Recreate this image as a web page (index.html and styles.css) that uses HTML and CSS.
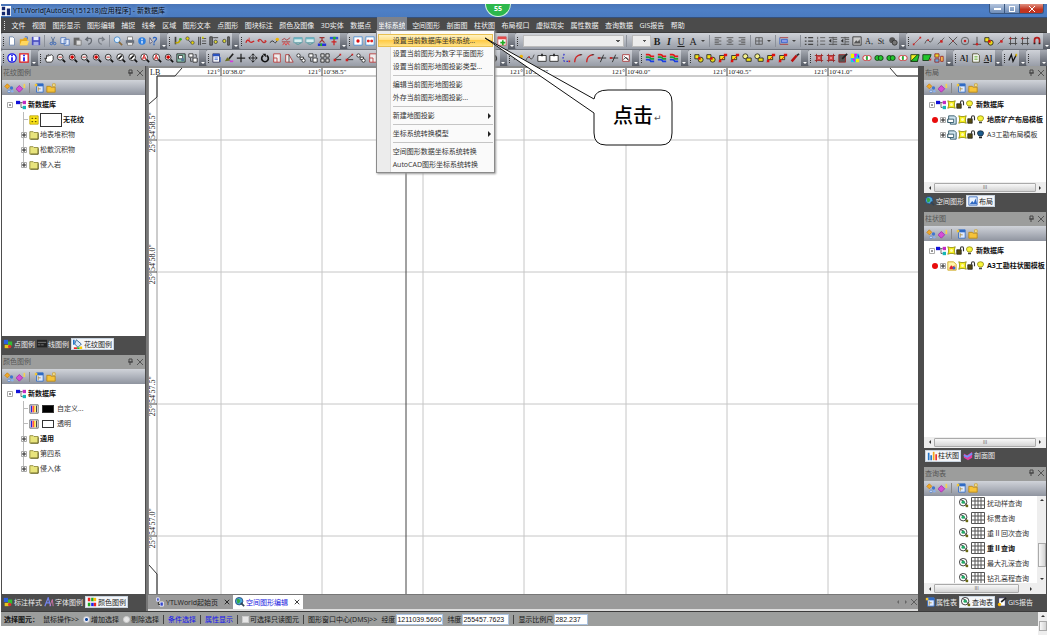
FILE: index.html
```html
<!DOCTYPE html>
<html lang="zh-CN">
<head>
<meta charset="utf-8">
<title>YTLWorld</title>
<link rel="stylesheet" href="styles.css">
</head>
<body>
<svg class="sprite" aria-hidden="true">
  <symbol id="new" viewBox="0 0 12 12"><path d="M3 1h4l2 2v8H3z" fill="#fff" stroke="#6b83a8"/></symbol>
  <symbol id="open" viewBox="0 0 12 12"><path d="M1 4h4l1-2h4v9H1z" fill="#e8a91c"/><path d="M3 6h9l-2 5H1z" fill="#ffd75e"/><path d="M7 1h3v3" fill="none" stroke="#3567c4"/></symbol>
  <symbol id="save" viewBox="0 0 12 12"><path d="M1 1h10v10H1z" fill="#4a4fc0"/><path d="M3 1h6v4H3z" fill="#e9ecff"/><path d="M3 7h6v4H3z" fill="#a8aee8"/></symbol>
  <symbol id="cut" viewBox="0 0 12 12"><path d="M4 1l3 7M8 1L5 8" stroke="#536d95" fill="none"/><circle cx="4" cy="9" r="1.5" fill="none" stroke="#2f60b8"/><circle cx="8" cy="9" r="1.5" fill="none" stroke="#2f60b8"/></symbol>
  <symbol id="copy" viewBox="0 0 12 12"><path d="M1 2h6v7H1zM5 4h6v7H5z" fill="#e6eefb" stroke="#4d76bd"/></symbol>
  <symbol id="paste" viewBox="0 0 12 12"><path d="M2 2h7v9H2z" fill="#666"/><path d="M5 5h6v6H5z" fill="#ddd" stroke="#777"/></symbol>
  <symbol id="undo" viewBox="0 0 12 12"><path d="M3 4q6-3 6 1T5 10M5 1L2 4l3 2" stroke="#666b73" stroke-width="1.5" fill="none"/></symbol>
  <symbol id="redo" viewBox="0 0 12 12"><path d="M9 4Q3 1 3 5t4 5M7 1l3 3-3 2" stroke="#7c8189" stroke-width="1.5" fill="none"/></symbol>
  <symbol id="find" viewBox="0 0 12 12"><circle cx="5" cy="4.500" r="3.500" fill="#dff0ff" stroke="#3c83c8"/><path d="M7 7l4 4" stroke="#8a6a3c" stroke-width="2"/></symbol>
  <symbol id="print" viewBox="0 0 12 12"><path d="M3 1h6v4H3z" fill="#fff" stroke="#777"/><path d="M1 5h10v4H1z" fill="#68707c"/><path d="M3 8h6v3H3z" fill="#fff" stroke="#777"/></symbol>
  <symbol id="info" viewBox="0 0 12 12"><circle cx="6" cy="6" r="4.500" fill="#2f7fe0"/><path d="M6 3v2M6 6v3" stroke="#fff" stroke-width="1.500"/></symbol>
  <symbol id="help" viewBox="0 0 12 12"><path d="M5 3q1-2 3-1t0 3-2 3M6 9v2" stroke="#2b63c0" stroke-width="1.500" fill="none"/><path d="M1 2v7l3-2z" fill="#fff" stroke="#557"/></symbol>
  <symbol id="vnode" viewBox="0 0 12 12"><path d="M2 1h2v9H2z" fill="#444"/><path d="M3 8q5 1 6-5" stroke="#c0a800" stroke-width="2" fill="none"/><circle cx="9" cy="4" r="1.500" fill="#3a3"/></symbol>
  <symbol id="vwave" viewBox="0 0 12 12"><circle cx="3" cy="3" r="2" fill="#e8d600" stroke="#555"/><circle cx="9" cy="8" r="2" fill="#e8d600" stroke="#555"/><path d="M4 5l3 3" stroke="#333"/></symbol>
  <symbol id="vbar" viewBox="0 0 12 12"><path d="M2 1v10M4 1v10" stroke="#333"/><path d="M6 3h5M6 6h5M6 9h5" stroke="#444"/><path d="M6 1h2v2H6z" fill="#d8d000"/></symbol>
  <symbol id="vbar2" viewBox="0 0 12 12"><path d="M1 1h3v10H1z" fill="#777" stroke="#333"/><circle cx="8" cy="7" r="2" fill="#e0dc30" stroke="#444"/><path d="M5 2h6" stroke="#333"/></symbol>
  <symbol id="vbar3" viewBox="0 0 12 12"><path d="M8 1h2v10H8z" fill="#777" stroke="#333"/><circle cx="4" cy="6" r="2" fill="#e0dc30" stroke="#444"/></symbol>
  <symbol id="crv" viewBox="0 0 12 12"><path d="M1 8q2-5 4-2t6 0" stroke="#c22" stroke-width="1.500" fill="none"/><path d="M5 2v5" stroke="#d33"/></symbol>
  <symbol id="crv2" viewBox="0 0 12 12"><path d="M1 6q2-4 5 0t5 0" stroke="#b33" stroke-width="1.500" fill="none"/><path d="M1 5h2v2H1zM9 5h2v2H9z" fill="#d22"/></symbol>
  <symbol id="crv3" viewBox="0 0 12 12"><path d="M1 8q3-4 5-1t4-2" stroke="#222" fill="none"/><circle cx="10" cy="4" r="2" fill="#f0b400"/></symbol>
  <symbol id="crv4" viewBox="0 0 12 12"><path d="M1 5l3-2 3 2 4-3M1 7h10" stroke="#a33" fill="none"/><path d="M2 11l2-3 2 3 2-3 2 3" stroke="#e33" fill="none"/></symbol>
  <symbol id="win" viewBox="0 0 12 12"><path d="M1 2h10v6H1z" fill="#d8efef" stroke="#5b9aa6"/><path d="M3 9q3 3 7-1" stroke="#499" fill="none"/><path d="M1 2h10v2H1z" fill="#6bb4c4"/></symbol>
  <symbol id="mark" viewBox="0 0 12 12"><path d="M1 9h10v3H1z" fill="#2734d8"/><path d="M4 9h2v3H4z" fill="#2b2"/><path d="M3 2h6M6 2v3M3 8l3-3 3 3" stroke="#933" stroke-width="1.500" fill="none"/></symbol>
  <symbol id="mark2" viewBox="0 0 12 12"><path d="M1 1h10v3H1z" fill="#2b55e0"/><path d="M5 1h3v3H5z" fill="#2b2"/><path d="M6 4v7M3 7h6" stroke="#c22" stroke-width="1.500"/></symbol>
  <symbol id="dot" viewBox="0 0 12 12"><path d="M1 1h10v10H1z" fill="#fff" stroke="#478bd0"/><circle cx="6" cy="6" r="2" fill="#d11"/></symbol>
  <symbol id="dots" viewBox="0 0 12 12"><path d="M1 1h10v10H1z" fill="#fff" stroke="#478bd0"/><path d="M3 5h2v2H3zM7 5h2v2H7z" fill="#d11" stroke="#d11"/></symbol>
  <symbol id="addrow" viewBox="0 0 12 12"><path d="M1 1h10v10H1z" fill="#fff" stroke="#c55"/><path d="M1 1h10v3H1z" fill="#e24b4b"/><path d="M7 5v6M4 8h6" stroke="#2a2" stroke-width="2"/></symbol>
  <symbol id="lines" viewBox="0 0 12 12"><path d="M2 2h8M2 4h5M2 6h8M2 8h5M2 10h8" stroke="#555"/></symbol>
  <symbol id="linesc" viewBox="0 0 12 12"><path d="M2 2h8M4 4h4M2 6h8M4 8h4M2 10h8" stroke="#555"/></symbol>
  <symbol id="linesr" viewBox="0 0 12 12"><path d="M2 2h8M5 4h5M2 6h8M5 8h5M2 10h8" stroke="#555"/></symbol>
  <symbol id="grid4" viewBox="0 0 12 12"><path d="M2 2h8v8H2zM6 2v8M2 6h8" stroke="#555" fill="none"/></symbol>
  <symbol id="rowsel" viewBox="0 0 12 12"><path d="M1 2h10M1 10h10" stroke="#a33"/><path d="M3 4h7v4H3z" fill="#8a9be8" stroke="#335fc8"/><path d="M1 2v8" stroke="#335fc8"/></symbol>
  <symbol id="bullets" viewBox="0 0 12 12"><path d="M1 2h2M1 6h2M1 10h2M5 2h6M5 6h6M5 10h6" stroke="#444" stroke-width="1.500"/></symbol>
  <symbol id="numlist" viewBox="0 0 12 12"><path d="M2 1v3M2 5v3M2 9v3M5 2h6M5 6h6M5 10h6" stroke="#555"/></symbol>
  <symbol id="indent" viewBox="0 0 12 12"><path d="M1 2h10M6 4h5M6 7h5M1 10h10" stroke="#444"/><path d="M4 3L1 6l3 2z" fill="#333"/><path d="M6 1v10" stroke="#555"/></symbol>
  <symbol id="pict" viewBox="0 0 12 12"><path d="M1 1h10v10H1z" fill="#ccc" stroke="#333"/><path d="M2 9l3-4 2 2 2-3 1 5z" fill="#555"/></symbol>
  <symbol id="ball" viewBox="0 0 12 12"><circle cx="5" cy="5" r="3.500" fill="#555"/><circle cx="8" cy="8" r="3" fill="#777" stroke="#333"/></symbol>
  <symbol id="seg" viewBox="0 0 12 12"><path d="M2 10l8-8" stroke="#a44"/><path d="M1 9h2v2H1zM9 1h2v2H9z" fill="#c22"/></symbol>
  <symbol id="segm" viewBox="0 0 12 12"><path d="M2 10l8-8" stroke="#555"/><path d="M5 5h3v3H5z" fill="#c22"/></symbol>
  <symbol id="wave" viewBox="0 0 12 12"><path d="M1 9q3-7 5-3t5-4" stroke="#444" fill="none"/><circle cx="5" cy="5" r="1" fill="#c22"/></symbol>
  <symbol id="cross" viewBox="0 0 12 12"><path d="M1 1l10 10M11 1L1 11" stroke="#444"/><circle cx="6" cy="6" r="1" fill="#c22"/></symbol>
  <symbol id="target" viewBox="0 0 12 12"><circle cx="6" cy="6" r="4.500" stroke="#555" fill="none"/><circle cx="6" cy="6" r="1.500" fill="#c22"/></symbol>
  <symbol id="perp" viewBox="0 0 12 12"><path d="M6 1v9M1 10h10" stroke="#444"/><circle cx="6" cy="10" r="1.500" fill="#c22"/></symbol>
  <symbol id="hash" viewBox="0 0 12 12"><path d="M3 1v10M9 1v10M1 3h10M1 9h10" stroke="#444"/><path d="M2 2h2v2H2z" fill="#c22"/></symbol>
  <symbol id="magnet" viewBox="0 0 12 12"><path d="M3 9V5q0-3 3-3t3 3v4" stroke="#b21c1c" stroke-width="2" fill="none"/><path d="M2 8h2v2H2zM8 8h2v2H8z" fill="#222"/></symbol>
  <symbol id="bluei" viewBox="0 0 12 12"><circle cx="6" cy="6" r="5" fill="#fff" stroke="#1111e8" stroke-width="1.500"/><path d="M6 2v2M6 5v5" stroke="#1111e8" stroke-width="2"/></symbol>
  <symbol id="redi" viewBox="0 0 12 12"><path d="M1 1h10v10H1z" fill="#fff" stroke="#e01818" stroke-width="1.500"/><path d="M6 2v2M6 5v5" stroke="#1111e8" stroke-width="2"/></symbol>
  <symbol id="hand" viewBox="0 0 12 12"><path d="M3 11L1 6l2 1V3l2 1V2l2 1 2-1 2 2v4l-2 3z" fill="#fff" stroke="#222"/></symbol>
  <symbol id="zoom" viewBox="0 0 12 12"><circle cx="5" cy="5" r="3.500" fill="#eee" stroke="#222"/><path d="M8 8l3 3" stroke="#111" stroke-width="2"/><path d="M3 5h4" stroke="#b11"/></symbol>
  <symbol id="zoomp" viewBox="0 0 12 12"><circle cx="5" cy="5" r="3.500" fill="#fdd" stroke="#222"/><path d="M8 8l3 3" stroke="#111" stroke-width="2"/><path d="M3 5h4M5 3v4" stroke="#c00" stroke-width="2"/></symbol>
  <symbol id="zooma" viewBox="0 0 12 12"><circle cx="5" cy="5" r="4" fill="#fff" stroke="#111"/><path d="M3 7l4-4" stroke="#111" stroke-width="2"/><path d="M8 8l3 3" stroke="#111" stroke-width="2"/></symbol>
  <symbol id="zoomr" viewBox="0 0 12 12"><circle cx="5" cy="5" r="4" fill="#fff" stroke="#222"/><path d="M3 8l2-6 2 6M3 6h4" stroke="#c11" fill="none"/><path d="M8 8l3 3" stroke="#111" stroke-width="2"/></symbol>
  <symbol id="map" viewBox="0 0 12 12"><path d="M1 1h10v10H1z" fill="#8ac4ae" stroke="#222"/><path d="M3 3h5v4H3z" fill="#fff" stroke="#333"/><circle cx="8" cy="8" r="2" fill="#579"/></symbol>
  <symbol id="sqs" viewBox="0 0 12 12"><path d="M1 1h5v4H1zM6 6h5v5H6z" fill="#fff" stroke="#222"/><path d="M8 2h2v3M3 6v4h2" fill="none" stroke="#444"/></symbol>
  <symbol id="tbl" viewBox="0 0 12 12"><path d="M1 1h8v10H1z" fill="#fff" stroke="#335"/><path d="M1 1h8v3H1z" fill="#2a52c0"/><path d="M3 6h4M3 8h4M10 5v6" stroke="#335fd0"/></symbol>
  <symbol id="brush" viewBox="0 0 12 12"><path d="M11 1L6 7" stroke="#222" stroke-width="2"/><path d="M1 10l3-5 4 4z" fill="#6b6f22"/><path d="M7 9h4v2H7z" fill="#d33be0"/></symbol>
  <symbol id="plus" viewBox="0 0 12 12"><path d="M6 1v10M1 6h10" stroke="#222" stroke-width="1.500"/></symbol>
  <symbol id="move" viewBox="0 0 12 12"><path d="M6 1v10M1 6h10M4 3l2-2 2 2M4 9l2 2 2-2M3 4L1 6l2 2M9 4l2 2-2 2" stroke="#111" fill="none"/></symbol>
  <symbol id="rot" viewBox="0 0 12 12"><path d="M4 3a4 4 0 1 0 4 0" stroke="#111" stroke-width="2" fill="none"/><path d="M3 1h4v4z" fill="#111"/></symbol>
  <symbol id="redsq" viewBox="0 0 12 12"><path d="M2 1h8v10H2z" fill="#eee" stroke="#b33"/><path d="M2 6h4v5" stroke="#b33" fill="none"/></symbol>
  <symbol id="skew" viewBox="0 0 12 12"><path d="M2 2h4l5 9H2z" fill="#eee" stroke="#a33"/><path d="M6 2v9" stroke="#333"/></symbol>
  <symbol id="grps" viewBox="0 0 12 12"><circle cx="3" cy="3" r="2" fill="#fff" stroke="#222"/><path d="M5 5h4v3H5z" fill="#fff" stroke="#222"/><circle cx="9" cy="9" r="2" fill="#fff" stroke="#222"/></symbol>
  <symbol id="four" viewBox="0 0 12 12"><path d="M1 1h4v4H1zM7 1h4v4H7zM1 7h4v4H1zM7 7h4v4H7z" fill="#ddd" stroke="#222"/></symbol>
  <symbol id="ang" viewBox="0 0 12 12"><path d="M10 2L3 8h8" stroke="#222" fill="none"/><path d="M2 7h3v3H2zM9 1h2v2H9z" fill="#c22"/></symbol>
  <symbol id="rect" viewBox="0 0 12 12"><path d="M1 3h10v7H1z" fill="#fff" stroke="#222"/><path d="M5 1h2v3H5z" fill="#222"/></symbol>
  <symbol id="arc" viewBox="0 0 12 12"><path d="M2 11Q2 3 10 2" stroke="#c22" stroke-width="1.500" fill="none"/><path d="M8 2h3" stroke="#333"/></symbol>
  <symbol id="barc" viewBox="0 0 12 12"><path d="M4 1Q1 6 4 10h5" stroke="#33c" stroke-width="1.500" fill="none" stroke-dasharray="2"/><path d="M9 9h2v2H9z" fill="#c22"/></symbol>
  <symbol id="trim" viewBox="0 0 12 12"><path d="M1 6h10M4 11l4-9" stroke="#222"/><path d="M1 5h3v2H1z" fill="#c22"/></symbol>
  <symbol id="img" viewBox="0 0 12 12"><path d="M2 2h8v8H2z" fill="#fff" stroke="#a33"/><path d="M3 8q3-5 6 0M4 4l5 5" stroke="#333" fill="none"/></symbol>
  <symbol id="layers" viewBox="0 0 12 12"><path d="M1 2h3q2 0 3 2h4" stroke="#e01818" stroke-width="2" fill="none"/><path d="M1 5h3q2 0 3 2h4" stroke="#19a033" stroke-width="2" fill="none"/><path d="M1 8h3q2 0 3 2h4" stroke="#1a3fe0" stroke-width="2" fill="none"/></symbol>
  <symbol id="ycmp" viewBox="0 0 12 12"><path d="M1 2h5v5H1z" fill="#f2e21a" stroke="#222"/><circle cx="8" cy="8" r="3" fill="#e8d81c" stroke="#222"/><path d="M5 5h3v3H5z" fill="#d11"/></symbol>
  <symbol id="ycmp2" viewBox="0 0 12 12"><path d="M2 3h6v5H2z" fill="#f2e21a" stroke="#222"/><path d="M1 11l9-9" stroke="#d11"/><path d="M7 1h4v3H7zM1 8h3v3H1z" fill="#d11"/></symbol>
  <symbol id="ycmp3" viewBox="0 0 12 12"><circle cx="4" cy="4" r="3" fill="#f4f08a" stroke="#222"/><path d="M5 6h6v4H5z" fill="#f2e21a" stroke="#222"/></symbol>
  <symbol id="pen" viewBox="0 0 12 12"><path d="M2 10l6-7" stroke="#b11" stroke-width="3"/><path d="M8 3l3-2" stroke="#333" stroke-width="2"/></symbol>
  <symbol id="hatch" viewBox="0 0 12 12"><path d="M3 1v10M9 1v10M1 3h10M1 9h10" stroke="#922"/><path d="M4 4h4v4H4z" fill="#e88" stroke="#c22"/></symbol>
  <symbol id="hatch2" viewBox="0 0 12 12"><path d="M1 2h8v9H1z" fill="#555" stroke="#922"/><path d="M5 7l6-6" stroke="#222" stroke-width="2"/></symbol>
  <symbol id="rgb" viewBox="0 0 12 12"><path d="M1 1h10v10H1z" fill="#17c8e8"/><path d="M1 1h4v5H1zM7 7h4v4H7z" fill="#f4f000"/><path d="M5 1h4l-3 6zM2 7h4v4z" fill="#f0e"/><path d="M9 3h2v4z" fill="#22f"/></symbol>
  <symbol id="venn" viewBox="0 0 12 12"><circle cx="4" cy="6" r="3" fill="#fff" stroke="#c22"/><circle cx="8" cy="6" r="3" fill="#fff" stroke="#c22"/><path d="M6 4v4" stroke="#1b3" stroke-width="2"/></symbol>
  <symbol id="venng" viewBox="0 0 12 12"><circle cx="4" cy="6" r="3" fill="#23c52e" stroke="#131"/><circle cx="8" cy="6" r="3" fill="#23c52e" stroke="#131"/></symbol>
  <symbol id="gsq" viewBox="0 0 12 12"><path d="M1 2h8v8H1z" fill="#f4ee20" stroke="#131"/><path d="M1 10l8-8h2l-2 8z" fill="#23c52e" stroke="#131"/></symbol>
  <symbol id="gsq2" viewBox="0 0 12 12"><path d="M1 2h10l-3 7H1z" fill="#23c52e" stroke="#131"/><path d="M8 9l3-3v3z" fill="#d22"/></symbol>
  <symbol id="cells" viewBox="0 0 12 12"><path d="M1 1h5v4H1z" fill="#e8d82c" stroke="#922"/><path d="M1 7h5v4H1z" fill="#6ad" stroke="#922"/><path d="M8 4h3v6H8z" fill="#fc5" stroke="#922"/></symbol>
  <symbol id="page" viewBox="0 0 12 12"><path d="M2 1h6l2 2v8H2z" fill="#fff" stroke="#442"/><path d="M4 4h4M4 6h4M4 8h4" stroke="#6a3"/></symbol>
  <symbol id="check" viewBox="0 0 12 12"><path d="M1 9l3-7 2 8 4-8" stroke="#111" stroke-width="1.500" fill="none"/><path d="M9 1h2v3H9z" fill="#d8b000"/></symbol>
  <symbol id="gems" viewBox="0 0 12 12"><path d="M4 1l3 3-3 3-3-3z" fill="#f0a92a" stroke="#c8841a"/><circle cx="9" cy="6" r="2" fill="#3f74d0"/><circle cx="6" cy="10" r="1.500" fill="#e9e9ff" stroke="#58c"/><circle cx="10" cy="10" r="1.500" fill="#8ab0ee"/></symbol>
  <symbol id="gem" viewBox="0 0 12 12"><path d="M4 3l4 4-4 4-4-4z" fill="#d64fd8" stroke="#a42ca8"/><path d="M9 1h2v5H9z" fill="#f5d050"/></symbol>
  <symbol id="tree" viewBox="0 0 12 12"><path d="M3 1h8v10H3z" fill="#dfeaff" stroke="#2f6ac4"/><path d="M3 1h8v3H3z" fill="#2f6ac4"/><path d="M5 5v5M5 7h3" stroke="#a83"/><path d="M1 1h3v3H1z" fill="#f2c434"/></symbol>
  <symbol id="fold" viewBox="0 0 12 12"><path d="M1 4h4l1 1h5v6H1z" fill="#f6c33a" stroke="#b88514"/><path d="M8 1h3v3H8z" fill="#fff3b0" stroke="#caa030"/></symbol>
  <symbol id="root" viewBox="0 0 12 12"><path d="M5 3h3M6 3v6h2" stroke="#555" fill="none"/><path d="M0 1h5v4H0z" fill="#1111d8"/><path d="M8 1h4v4H8z" fill="#c12cc0"/><path d="M8 7h4v4H8z" fill="#16b6b6"/></symbol>
  <symbol id="folder" viewBox="0 0 12 12"><path d="M1 2h4l1 1h5v8H1z" fill="#e8e47c" stroke="#8a8538"/><path d="M2 11h9V4" stroke="#5c5820" fill="none"/></symbol>
  <symbol id="pattern" viewBox="0 0 12 12"><path d="M1 1h10v10H1z" fill="#ffe81a" stroke="#b8a000"/><path d="M3 4h2M7 4h2M3 8h2M7 8h2" stroke="#6b5d00" stroke-width="1.500"/></symbol>
  <symbol id="colors" viewBox="0 0 12 12"><path d="M1 1h10v10H1z" fill="#fff" stroke="#555"/><path d="M3 2v8" stroke="#22d" stroke-width="1.500"/><path d="M5 2v8" stroke="#f22" stroke-width="1.500"/><path d="M7 2v8" stroke="#fc0" stroke-width="1.500"/><path d="M9 2v8" stroke="#222"/></symbol>
  <symbol id="sun" viewBox="0 0 12 12"><path d="M1 1l3 1h4l3-1-1 3v4l1 3-3-1H4l-3 1 1-3V4z" fill="#f5ee1e" stroke="#8a8400"/><circle cx="6" cy="6" r="2" fill="#fffbb0"/></symbol>
  <symbol id="lock" viewBox="0 0 12 12"><path d="M1 5h6v6H1z" fill="#544a10" stroke="#222"/><path d="M6 5V3q0-2 2-2t2 2v4" stroke="#333" stroke-width="1.500" fill="none"/></symbol>
  <symbol id="bulb" viewBox="0 0 12 12"><path d="M6 1q4 0 4 3 0 2-2 4H4Q2 6 2 4q0-3 4-3z" fill="#f8f43c" stroke="#857d00"/><path d="M4 10h4" stroke="#444" stroke-width="2"/></symbol>
  <symbol id="bulboff" viewBox="0 0 12 12"><path d="M6 1q4 0 4 3 0 2-2 4H4Q2 6 2 4q0-3 4-3z" fill="#1d5b8c" stroke="#123"/><path d="M4 10h4" stroke="#222" stroke-width="2"/></symbol>
  <symbol id="layout" viewBox="0 0 12 12"><path d="M2 1h7l2 2v8H4V9H1V5h1z" fill="#cfe4ee" stroke="#234c5e"/><path d="M1 5h7v4H1z" fill="#fff" stroke="#234c5e"/></symbol>
  <symbol id="column" viewBox="0 0 12 12"><path d="M1 1h7l3 3v7H1z" fill="#fff7a8" stroke="#c9a21a"/><path d="M3 8l2-3 2 2 2-2v5H3z" fill="#d23"/><path d="M7 7h3v3H7z" fill="#36c"/></symbol>
  <symbol id="query" viewBox="0 0 12 12"><circle cx="5" cy="5" r="4.500" fill="#fff" stroke="#222"/><path d="M2 2q5 1 6 6" stroke="#222" fill="none"/><circle cx="5" cy="5" r="2" fill="#2a6"/><path d="M8 8h3v3H8z" fill="#6a6a10"/></symbol>
  <symbol id="chart" viewBox="0 0 12 12"><path d="M1 11V2h2v9zM4 11V5h2v6z" fill="#27c"/><path d="M7 11V1h2v10z" fill="#f4a81e"/><path d="M10 11V4h2v7z" fill="#e33"/></symbol>
  <symbol id="pts" viewBox="0 0 12 12"><path d="M1 1h5v5H1z" fill="#2d60e0"/><path d="M6 3h5v5H6z" fill="#3b3"/><path d="M2 7h5v4H2z" fill="#e8c61c"/><circle cx="8" cy="9" r="2" fill="#d33"/></symbol>
  <symbol id="lin" viewBox="0 0 12 12"><path d="M0 1h12v9H0z" fill="#222"/><path d="M1 4h10M1 7h3M5 7h3" stroke="#888"/></symbol>
  <symbol id="bucket" viewBox="0 0 12 12"><path d="M4 1l6 5-4 4-4-4z" fill="#dceafa" stroke="#258"/><path d="M1 1v6" stroke="#27c" stroke-width="2"/><path d="M1 10h4v2H1z" fill="#e22"/><path d="M5 10h3v2H5z" fill="#2b2"/><path d="M8 9h3v3H8z" fill="#fc0"/></symbol>
  <symbol id="font" viewBox="0 0 12 12"><path d="M1 11L5 1l3 10M3 7h4" stroke="#7585f0" stroke-width="1.500" fill="none"/><path d="M7 11l3-8 1 8" stroke="#e07ab0" fill="none"/></symbol>
  <symbol id="pal" viewBox="0 0 12 12"><path d="M1 1h3v4H1zM8 7h3v4H8z" fill="#e22"/><path d="M5 1h3v4H5zM1 7h3v4H1z" fill="#2a2"/><path d="M8 1h3v4H8z" fill="#fb0"/><path d="M5 7h3v4H5z" fill="#22e"/></symbol>
  <symbol id="globe" viewBox="0 0 12 12"><circle cx="5" cy="5" r="4.500" fill="#49a7dc" stroke="#247"/><path d="M2 3q3-2 4 1T3 8z" fill="#3a4"/><path d="M7 7l4 4" stroke="#345" stroke-width="2"/></symbol>
  <symbol id="lay" viewBox="0 0 12 12"><path d="M1 1h10v10H1z" fill="#eaf3ff" stroke="#36b"/><path d="M2 10l3-4 2 2 2-5 2 7z" fill="#2f6ac4"/></symbol>
  <symbol id="section" viewBox="0 0 12 12"><path d="M1 3l4 2 6-4v7L6 11 1 8z" fill="#e23fa0"/><path d="M1 5l4 2 6-4" stroke="#69f" stroke-width="2" fill="none"/></symbol>
  <symbol id="report" viewBox="0 0 12 12"><path d="M2 1h8v10H2z" fill="#fff" stroke="#335"/><path d="M5 6l6-5" stroke="#222" stroke-width="2"/><circle cx="3" cy="9" r="2" fill="#fb0"/></symbol>
  <symbol id="home" viewBox="0 0 12 12"><path d="M2 1h3v4H2zM6 6h4v5H6z" fill="#34c" stroke="#fff"/><path d="M4 6v3h2" stroke="#222" fill="none"/></symbol>
  <symbol id="logo" viewBox="0 0 12 12"><path d="M0 0h12v12H0z" fill="#fff"/><path d="M1 1h4v4H1zM1 7h4v4H1zM7 3h4v8H7z" fill="#14286e"/></symbol>
  <symbol id="pin" viewBox="0 0 8 8"><path d="M3 1h3v3H3zM2 4h5M4 4v3" stroke="#444" fill="none"/></symbol>
  <symbol id="x" viewBox="0 0 8 8"><path d="M1 1l6 6M7 1L1 7" stroke="currentColor" fill="none"/></symbol>
  <symbol id="minus" viewBox="0 0 8 8"><path d="M1.500 1.500h5v5h-5z" stroke="#aaa" fill="#fff"/><path d="M3 4h2" stroke="#333"/></symbol>
  <symbol id="expand" viewBox="0 0 8 8"><path d="M1.500 1.500h5v5h-5z" stroke="#aaa" fill="#fff"/><path d="M2 4h4M4 2v4" stroke="#222"/></symbol>
  <symbol id="al" viewBox="0 0 8 8"><path d="M5 2v4L3 4z" fill="#333"/></symbol>
  <symbol id="ar" viewBox="0 0 8 8"><path d="M3 2v4l2-2z" fill="#333"/></symbol>
  <symbol id="au" viewBox="0 0 8 8"><path d="M2 5h4L4 3z" fill="#333"/></symbol>
  <symbol id="ad" viewBox="0 0 8 8"><path d="M2 3h4L4 5z" fill="#333"/></symbol>
  <symbol id="gridt" viewBox="0 0 14 12"><path d="M.5.5h13v11H.5zM4 1v10M7 1v10M10 1v10M1 4h12M1 8h12" stroke="#555" fill="#fff"/></symbol>
</svg>

<div class="app">
  <header class="title">
    <svg class="ic"><use href="#logo"/></svg>
    <h1>YTLWorld[AutoGIS(151218)应用程序] - 新数据库</h1>
    <div class="bubble">55</div>
    <div class="winbtns"><button aria-label="最小化"><i class="wmin"></i></button><button aria-label="还原"><i class="wmax"></i></button><button class="close" aria-label="关闭"><svg class="s8"><use href="#x"/></svg></button></div>
  </header>

  <nav class="menubar">
    <div class="menus">
      <i class="grip"></i><button>文件</button><button>视图</button><button>图形显示</button><button>图形编辑</button><button>捕捉</button><button>线条</button><button>区域</button><button>图形文本</button><button>点图形</button><button>图块标注</button><button>颜色及图像</button><button>3D实体</button><button>数据点</button><div class="drop"><button class="on">坐标系统</button>
        <div class="popup" role="menu">
          <button class="hot">设置当前数据库坐标系统...</button>
          <button>设置当前图形为数字平面图形</button>
          <button>设置当前图形地图投影类型...</button>
          <hr>
          <button>编辑当前图形地图投影</button>
          <button>外存当前图形地图投影...</button>
          <hr>
          <button class="sub">新建地图投影</button>
          <hr>
          <button class="sub">坐标系统转换模型</button>
          <hr>
          <button>空间图形数据坐标系统转换</button>
          <button>AutoCAD图形坐标系统转换</button>
        </div>
      </div><button>空间图形</button><button>剖面图</button><button>柱状图</button><button>布局视口</button><button>虚拟现实</button><button>属性数据</button><button>查询数据</button><button>GIS报告</button><button>帮助</button>
    </div>
  </nav>

  <div class="bar" id="bar1"></div>
  <div class="bar fit" id="bar2"></div>

  <main class="work">
    <aside class="side left">
      <section class="dock d-pattern">
        <h2>花纹图例<svg class="s8"><use href="#pin"/></svg><svg class="s8"><use href="#x"/></svg></h2>
        <div class="ptools"></div>
        <ul class="tree">
          <li><svg class="s8"><use href="#minus"/></svg><svg class="ic"><use href="#root"/></svg><b>新数据库</b></li>
          <li class="sub leaf"><i class="stub"></i><svg class="ic"><use href="#pattern"/></svg><i class="swatch big"></i><b>无花纹</b></li>
          <li class="sub"><svg class="s8"><use href="#expand"/></svg><svg class="ic"><use href="#folder"/></svg><span>地表堆积物</span></li>
          <li class="sub"><svg class="s8"><use href="#expand"/></svg><svg class="ic"><use href="#folder"/></svg><span>松散沉积物</span></li>
          <li class="sub"><svg class="s8"><use href="#expand"/></svg><svg class="ic"><use href="#folder"/></svg><span>侵入岩</span></li>
        </ul>
        <div class="tabs"><button><svg class="ic"><use href="#pts"/></svg>点图例</button><button><svg class="ic"><use href="#lin"/></svg>线图例</button><button class="on"><svg class="ic"><use href="#bucket"/></svg>花纹图例</button></div>
      </section>
      <section class="dock d-color">
        <h2>颜色图例<svg class="s8"><use href="#pin"/></svg><svg class="s8"><use href="#x"/></svg></h2>
        <div class="ptools"></div>
        <ul class="tree">
          <li><svg class="s8"><use href="#minus"/></svg><svg class="ic"><use href="#root"/></svg><b>新数据库</b></li>
          <li class="sub leaf"><i class="stub"></i><svg class="ic"><use href="#colors"/></svg><i class="swatch black"></i><span>自定义...</span></li>
          <li class="sub leaf"><i class="stub"></i><svg class="ic"><use href="#colors"/></svg><i class="swatch"></i><span>透明</span></li>
          <li class="sub"><svg class="s8"><use href="#expand"/></svg><svg class="ic"><use href="#folder"/></svg><b>通用</b></li>
          <li class="sub"><svg class="s8"><use href="#expand"/></svg><svg class="ic"><use href="#folder"/></svg><span>第四系</span></li>
          <li class="sub"><svg class="s8"><use href="#expand"/></svg><svg class="ic"><use href="#folder"/></svg><span>侵入体</span></li>
        </ul>
        <div class="tabs"><button><svg class="ic"><use href="#pts"/></svg>标注样式</button><button><svg class="ic"><use href="#font"/></svg>字体图例</button><button class="on"><svg class="ic"><use href="#pal"/></svg>颜色图例</button></div>
      </section>
    </aside>

    <section class="doc">
      <svg class="plot" id="plot"></svg>
      <div class="doctabs"><button><svg class="ic"><use href="#home"/></svg>YTLWorld起始页<svg class="cx"><use href="#x"/></svg></button><button class="on"><svg class="ic"><use href="#globe"/></svg>空间图形编辑<svg class="cx"><use href="#x"/></svg></button><span class="nav"><svg class="s8"><use href="#al"/></svg><svg class="s8"><use href="#ar"/></svg><svg class="s8"><use href="#x"/></svg></span></div>
    </section>

    <aside class="side right">
      <section class="dock d-layout">
        <h2>布局<svg class="s8"><use href="#pin"/></svg><svg class="s8"><use href="#x"/></svg></h2>
        <div class="ptools"></div>
        <ul class="tree tight">
          <li><svg class="s8"><use href="#minus"/></svg><svg class="ic"><use href="#root"/></svg><svg class="s9 first"><use href="#sun"/></svg><svg class="s9"><use href="#lock"/></svg><svg class="s9"><use href="#bulb"/></svg><b>新数据库</b></li>
          <li><i class="red"></i><svg class="s8"><use href="#expand"/></svg><svg class="ic"><use href="#layout"/></svg><svg class="s9 first"><use href="#sun"/></svg><svg class="s9"><use href="#lock"/></svg><svg class="s9"><use href="#bulb"/></svg><b>地质矿产布局模板</b></li>
          <li><i class="red none"></i><svg class="s8"><use href="#expand"/></svg><svg class="ic"><use href="#layout"/></svg><svg class="s9 first"><use href="#sun"/></svg><svg class="s9"><use href="#lock"/></svg><svg class="s9"><use href="#bulboff"/></svg><span>A3工勘布局模板</span></li>
        </ul>
        <div class="hscroll"><svg class="s8"><use href="#al"/></svg><i>III</i><svg class="s8"><use href="#ar"/></svg></div>
        <div class="tabs"><button><svg class="ic"><use href="#globe"/></svg>空间图形</button><button class="on"><svg class="ic"><use href="#lay"/></svg>布局</button></div>
      </section>
      <section class="dock d-column">
        <h2>柱状图<svg class="s8"><use href="#pin"/></svg><svg class="s8"><use href="#x"/></svg></h2>
        <div class="ptools"></div>
        <ul class="tree tight">
          <li><svg class="s8"><use href="#minus"/></svg><svg class="ic"><use href="#root"/></svg><svg class="s9 first"><use href="#sun"/></svg><svg class="s9"><use href="#lock"/></svg><svg class="s9"><use href="#bulb"/></svg><b>新数据库</b></li>
          <li><i class="red"></i><svg class="s8"><use href="#expand"/></svg><svg class="ic"><use href="#column"/></svg><svg class="s9 first"><use href="#sun"/></svg><svg class="s9"><use href="#lock"/></svg><svg class="s9"><use href="#bulb"/></svg><b>A3工勘柱状图模板</b></li>
        </ul>
        <div class="hscroll"><svg class="s8"><use href="#al"/></svg><i>III</i><svg class="s8"><use href="#ar"/></svg></div>
        <div class="tabs"><button class="on"><svg class="ic"><use href="#chart"/></svg>柱状图</button><button><svg class="ic"><use href="#section"/></svg>剖面图</button></div>
      </section>
      <section class="dock d-query">
        <h2>查询表<svg class="s8"><use href="#pin"/></svg><svg class="s8"><use href="#x"/></svg></h2>
        <div class="ptools"></div>
        <div class="scroller">
          <ul class="tree query">
            <li><svg class="ic"><use href="#query"/></svg><svg class="tg"><use href="#gridt"/></svg><span>扰动样查询</span></li>
            <li><svg class="ic"><use href="#query"/></svg><svg class="tg"><use href="#gridt"/></svg><span>标贯查询</span></li>
            <li><svg class="ic"><use href="#query"/></svg><svg class="tg"><use href="#gridt"/></svg><span>重Ⅱ回次查询</span></li>
            <li><svg class="ic"><use href="#query"/></svg><svg class="tg"><use href="#gridt"/></svg><b>重Ⅱ查询</b></li>
            <li><svg class="ic"><use href="#query"/></svg><svg class="tg"><use href="#gridt"/></svg><span>最大孔深查询</span></li>
            <li><svg class="ic"><use href="#query"/></svg><svg class="tg"><use href="#gridt"/></svg><span>钻孔高程查询</span></li>
          </ul>
          <div class="vscroll"><svg class="s8"><use href="#au"/></svg><i></i><svg class="s8"><use href="#ad"/></svg></div>
        </div>
        <div class="hscroll short"><svg class="s8"><use href="#al"/></svg><i>III</i><svg class="s8"><use href="#ar"/></svg></div>
        <div class="tabs"><button><svg class="ic"><use href="#tree"/></svg>属性表</button><button class="on"><svg class="ic"><use href="#query"/></svg>查询表</button><button><svg class="ic"><use href="#report"/></svg>GIS报告</button></div>
      </section>
    </aside>
  </main>

  <footer class="status">
    <form>
      <strong>选择图元：</strong><span>鼠标操作&gt;&gt;</span>
      <label><input type="radio" name="mode" checked>增加选择</label>
      <label><input type="radio" name="mode">剔除选择</label>
      <i class="rule"></i><a href="#">条件选择</a><i class="rule"></i><a href="#">属性显示</a><i class="rule"></i>
      <label><input type="checkbox">可选择只读图元</label>
      <i class="rule"></i><span>图形窗口中心(DMS)&gt;&gt;</span>
      <label>经度<input type="text" value="1211039.5690"></label>
      <label>纬度<input type="text" value="255457.7623"></label>
      <i class="rule"></i>
      <label>显示比例尺<input type="text" class="scale" value="282.237"></label>
    </form>
    <div class="vscroll end"><svg class="s8"><use href="#au"/></svg><i></i></div>
  </footer>
</div>

<svg class="callout" viewBox="0 0 192 110">
  <path d="M124 53H177Q188 53 188 65V96Q188 108 177 108H122Q110 108 110 96V76L1 1L110 62Q111 53 124 53Z" fill="#fff" stroke="#111"/>
  <text x="129" y="86" class="big">点击</text>
  <text x="170" y="84" class="ret">↵</text>
</svg>
<script src="app.js"></script>
</body>
</html>
```

FILE: styles.css
```css
* { box-sizing: border-box; }
body { margin: 0; background: #fff; color: #222; font: 7px/9px "Open Sans", "Noto Sans CJK SC", sans-serif; overflow: hidden; }
button, input { font: inherit; color: inherit; margin: 0; padding: 0; border: 0; background: none; }
button { display: inline-flex; align-items: center; white-space: nowrap; }
svg { display: block; flex: none; }
i { font-style: normal; flex: none; }
h1, h2 { margin: 0; font: inherit; }
.sprite { position: absolute; width: 0; height: 0; }
.ic { width: 10px; height: 10px; }
.s8 { width: 8px; height: 8px; }
.s9 { width: 9px; height: 9px; }
.cx { width: 6px; height: 6px; margin-left: 5px; color: #000; }

.app { height: 100vh; padding: 4px 5px 0 1px; display: flex; flex-direction: column; }
.title { position: relative; flex: none; height: 14px; display: flex; align-items: center; gap: 2px; background: linear-gradient(#4a76b8, #4d7fc6 50%, #4a7bc0); border-bottom: 1px solid #34507c; }
.title h1 { color: #040a14; flex: 1; text-shadow: 0 0 4px #c8d8f0; }
.bubble { position: absolute; left: 484px; top: 0; width: 26px; height: 13px; border: 1px solid #d9f5dd; border-top: 0; border-radius: 0 0 13px 13px; background: #2db84c; color: #fff; text-align: center; font-weight: bold; }
.winbtns { display: flex; align-self: flex-start; margin-right: 3px; height: 10px; border: 1px solid #3a577f; border-top: 0; border-radius: 0 0 3px 3px; overflow: hidden; }
.winbtns button { width: 15px; justify-content: center; background: linear-gradient(#b3c4dd, #6f8db8); border-right: 1px solid #3a577f; }
.winbtns .close { width: 23px; border: 0; background: linear-gradient(#e09080, #c23420 60%); color: #fff; }
.wmin { width: 7px; height: 2px; background: #fff; }
.wmax { width: 6px; height: 6px; border: 1px solid #fff; }

.menubar { flex: none; height: 15px; background: #4b4b4b; border-bottom: 1px solid #3b3b3b; }
.menus { width: 684px; height: 14px; display: flex; justify-content: space-between; align-items: stretch; color: #f2f2f2; padding-left: 2px; }
.menus > .grip { width: 2px; }
.drop { position: relative; display: flex; }
.drop .on { background: #7d828c; outline: 2px solid #7d828c; outline-offset: -1px; color: #fff; }
.popup { position: absolute; z-index: 5; left: -2px; top: 12px; width: 119px; padding: 3px 1px 1px; display: flex; flex-direction: column; color: #333; background: linear-gradient(90deg, #ececec 13px, #dadada 13px, #dadada 14px, #fafafa 14px); border: 1px solid #8b8b8b; box-shadow: 1px 1px 2px #999; }
.popup button { height: 13px; padding-left: 15px; }
.popup .hot { background: linear-gradient(#fff6cf, #ffe18a 45%, #ffcb47 50%, #ffe691); outline: 1px solid #e8bf50; outline-offset: -1px; }
.popup .sub { justify-content: space-between; padding-right: 2px; }
.popup .sub::after { content: ""; border: 3px solid transparent; border-left-color: #222; border-right: 0; }
.popup hr { width: 100px; height: 1px; margin: 2px 0 2px 15px; border: 0; background: #c5c5c5; }

.grip { width: 5px; display: flex; align-items: center; justify-content: center; }
.grip::before { content: ""; height: 9px; border-left: 1px dotted #333; }
.menus .grip::before { border-color: #ddd; }
.bar { flex: none; height: 17px; display: flex; background: #6f747d; }
.bar.fit { height: 16px; }
.group { display: flex; align-items: stretch; height: 16px; background: linear-gradient(#cfd2d8, #b4b8c0 50%, #989da7); border-radius: 2px 0 0 2px; }
.fit .group { flex: 1 1 auto; }
.fit .group:last-child { flex: 0 0 21px; }
.group > button { width: 12px; justify-content: center; }
.group .more { width: 7px; margin-left: auto; align-items: flex-end; background: linear-gradient(#a6aab2, #565b65); }
.group .more::after { content: ""; border: 2px solid transparent; border-top-color: #fff; border-bottom: 0; margin-bottom: 2px; }
.sep { width: 1px; margin: 2px 2px; background: #8b9099; }
.group .dd { width: 8px; }
.group .dd::after { content: ""; border: 2px solid transparent; border-top-color: #444; border-bottom: 0; }
.group .t { font-family: "Liberation Serif", serif; font-size: 10px; color: #222; }
.group .small { font-size: 8px; }
.t.b { font-weight: bold; } .t.it { font-style: italic; font-weight: bold; } .t.u { text-decoration: underline; }
.group select { appearance: none; width: 101px; height: 12px; margin: 2px 0 0 3px; border: 1px solid #bbb; border-radius: 0; background: linear-gradient(45deg, transparent 50%, #555 50%) calc(100% - 5px) 4px / 2px 2px no-repeat, linear-gradient(-45deg, transparent 50%, #555 50%) calc(100% - 3px) 4px / 2px 2px no-repeat, #ececec; }
.group .narrow { width: 19px; }

.work { flex: 1; min-height: 0; display: flex; background: #4d4d4d; }
.side { display: flex; flex-direction: column; gap: 2px; min-width: 0; }
.left { flex: 0 0 145px; }
.right { flex: 0 0 125px; padding-left: 1px; }
.dock { min-height: 0; display: flex; flex-direction: column; padding: 0 1px; background: #4d4d4d; }
.d-pattern { flex: 287 1 0; } .d-color { flex: 256 1 0; }
.d-layout { flex: 144 1 0; } .d-column { flex: 252 1 0; } .d-query { flex: 144 1 0; }
.dock h2 { flex: none; height: 13px; display: flex; align-items: center; gap: 2px; padding: 0 1px; background: #9c9d9c; color: #555; }
.dock h2 svg:first-of-type { margin-left: auto; }
.ptools { flex: none; height: 16px; display: flex; align-items: center; padding-left: 1px; background: linear-gradient(#d0d3d9, #b0b4bd 50%, #8f949f); border-top: 1px solid #9c9d9c; }
.ptools button { width: 12px; justify-content: center; }
.ptools .sep { height: 10px; margin: 0 3px 0 2px; background: #888; }
.tree { flex: 1; min-height: 0; margin: 0; padding: 2px 0 0 4px; list-style: none; background: #fff; overflow: hidden; }
.tree li { height: 15px; display: flex; align-items: center; gap: 2px; white-space: nowrap; color: #111; }
.tree .sub { margin-left: 14px; gap: 1px; background: linear-gradient(#bbb, #bbb) 3px 0 / 1px 100% no-repeat; }
.tree .sub:last-child { background-size: 1px 50%; }
.tree span { color: #333; }
.stub { width: 8px; height: 1px; background: linear-gradient(90deg, transparent 3px, #bbb 3px); }
.swatch { width: 12px; height: 8px; border: 1px solid #333; margin: 0 2px; background: #fff; }
.swatch.black { background: #000; }
.swatch.big { width: 22px; height: 14px; margin: 0; }
.tree.tight li { gap: 0; }
.tight .first { margin-left: 1px; }
.tight b, .tight span { margin-left: 2px; }
.tight .red { width: 6px; height: 6px; border-radius: 3px; background: #e80c0c; margin: 0 1px 0 4px; }
.tight .red.none { visibility: hidden; }
.hscroll { flex: none; height: 11px; display: flex; align-items: center; background: #eee; padding: 0 2px; }
.hscroll i { flex: 1; height: 9px; line-height: 7px; text-align: center; border: 1px solid #aaa; border-radius: 1px; background: linear-gradient(#f8f8f8, #d4d4d4); font-size: 5px; color: #555; }
.short { padding-right: 11px; }
.short i { margin-right: 8px; }
.tabs { flex: none; height: 17px; display: flex; align-items: flex-start; padding: 2px 0 0 1px; gap: 2px; color: #ececec; }
.tabs button { height: 12px; gap: 1px; }
.tabs .on { background: #f4f6f9; color: #222; outline: 1px solid #c9d4df; outline-offset: -1px; padding: 0 2px; }
.scroller { flex: 1; min-height: 0; display: flex; background: #fff; }
.tree.query { padding: 0 0 0 30px; }
.query li { border-left: 1px solid #bbb; padding-left: 4px; }
.tg { width: 14px; height: 12px; }
.vscroll { width: 9px; background: #eee; display: flex; flex-direction: column; align-items: center; }
.vscroll i { width: 8px; height: 24px; border: 1px solid #aaa; background: linear-gradient(90deg, #f8f8f8, #d4d4d4); margin-top: auto; }
.vscroll svg:last-child { margin-top: 8px; }

.doc { flex: 1; min-width: 0; display: flex; flex-direction: column; padding-left: 2px; margin-right: 4px; background: #777; }
.plot { flex: 1; min-height: 0; width: 100%; background: #fff; border-top: 2px solid #8a8a8a; border-left: 1px solid #888; }
.grid { stroke: #c6c6c6; } .axis { stroke: #444; } .edge { stroke: #999; } .curve { stroke: #333; fill: none; }
.lbl { font: 7px "Liberation Serif", serif; fill: #222; }
.vlbl { font: 8px "Liberation Serif", serif; fill: #222; }
.doctabs { flex: none; height: 17px; display: flex; align-items: stretch; background: #9a9a9a; border-top: 1px solid #777; border-bottom: 2px solid #ddd; padding-left: 7px; }
.doctabs button { gap: 1px; padding: 0 3px 0 0; color: #222; }
.doctabs .on { background: #fff; color: #1616e0; padding: 0 3px 0 2px; }
.nav { margin-left: auto; display: flex; align-items: center; opacity: .5; }

.status { flex: none; height: 24px; display: flex; border-top: 1px solid #3b3b3b; }
.status form { flex: 1; height: 14px; display: flex; align-items: center; gap: 4px; padding-left: 3px; background: #9c9e9d; white-space: nowrap; color: #161616; }
.status label { display: flex; align-items: center; gap: 1px; }
.status a { color: #1414f0; text-decoration: none; }
.status input[type=radio], .status input[type=checkbox] { appearance: none; width: 7px; height: 7px; border: 1px solid #ccc; background: #e6e6e6; }
.status input[type=radio] { border-radius: 4px; }
.status input[type=radio]:checked { background: radial-gradient(#124a9c 1px, #eef 2px); }
.status input[type=text] { width: 47px; height: 11px; background: #fff; border: 1px solid #aac2e0; font-family: "Liberation Sans", sans-serif; }
.status input.scale { width: 34px; }
.rule { width: 1px; height: 9px; background: #444; }
.end i { height: 10px; margin-top: 1px; }

.callout { position: absolute; left: 484px; top: 37px; width: 192px; height: 110px; z-index: 10; }
.big { font: 500 20px "Noto Sans CJK SC", serif; fill: #000; }
.ret { font: 9px "DejaVu Sans", sans-serif; fill: #555; }
```

FILE: app.js
```js
const icon = n => `<svg class="ic"><use href="#${n}"/></svg>`;
const special = {
  '|': '<i class="sep"></i>',
  v: '<button class="dd" aria-label="更多选项"></button>',
  font: '<select aria-label="字体"></select>',
  size: '<select class="narrow" aria-label="字号"></select>',
  B: '<button class="t b">B</button>', I: '<button class="t it">I</button>',
  U: '<button class="t u">U</button>', A: '<button class="t">A</button>',
  As: '<button class="t small">A,</button>', St: '<button class="t small">St</button>',
  AI: '<button class="t b small">A]</button>', AJ: '<button class="t b u small">A]</button>'
};
const item = n => special[n] || `<button aria-label="${n}">${icon(n)}</button>`;
const group = s => `<div class="group" role="toolbar"><i class="grip"></i>${s.split(' ').filter(Boolean).map(item).join('')}<button class="more" aria-label="工具栏选项"></button></div>`;

document.getElementById('bar1').innerHTML = [
  'new open save | cut copy paste undo redo | find print info help',
  'vnode vwave vbar vbar2 vbar3',
  'crv crv2 crv3 crv4 win win mark mark2',
  'dot dots dot dots dot dots dot dots dot dots dot dots addrow',
  'font | size B I U A v | lines linesc linesr | grid4 v | rowsel v | bullets numlist indent indent pict As St ball',
  'seg wave segm cross target perp ycmp segm hash hash magnet'
].map(group).join('');

document.getElementById('bar2').innerHTML = [
  'bluei redi',
  'hand zoom zoomp zoom zoomp zoom zooma zooma zoomr zoomr zoomp map sqs',
  'tbl brush plus move rot redsq skew grps sqs four ang ang grps redsq rect arc trim img rect arc trim img rect rot',
  'crv3 wave rect rect barc arc arc trim trim img',
  'layers layers layers',
  'ycmp ycmp ycmp2 ycmp2 ycmp3 ycmp3 ycmp2 ycmp2 pen',
  'hatch hatch hatch2 rgb venn venng venng venn gsq gsq2 cells',
  'AI page AJ',
  'check',
  ''
].map(group).join('');

document.querySelectorAll('.ptools').forEach(e => {
  e.innerHTML = item('gems') + item('gem') + '<i class="sep"></i>' + item('tree') + item('fold');
});

const xs = [72, 173, 274, 375, 477, 578, 679];
const ys = [72, 204, 336, 468];
const covered = 3;
let out = '<path class="edge" d="M8 8H780M8 8V540" fill="none"/>';
xs.forEach((x, k) => {
  const s = 38 + k / 2;
  out += `<line class="grid" x1="${x}" x2="${x}" y1="8" y2="100%"/>`;
  if (k === covered - 1) return;
  out += `<line class="axis" x1="${x}" x2="${x}" y1="0" y2="8"/>`;
  out += `<text class="lbl" x="${x - 1}" y="6" text-anchor="end">121°</text><text class="lbl" x="${x + 1}" y="6">10'${s.toFixed(1)}"</text>`;
});
ys.forEach((y, k) => {
  out += `<line class="grid" x1="8" x2="100%" y1="${y}" y2="${y}"/><line class="axis" x1="0" x2="8" y1="${y}" y2="${y}"/>`;
  out += `<text class="vlbl" transform="translate(6 ${y - 1}) rotate(-90)">54'${(58.5 - k / 2).toFixed(1)}"</text><text class="vlbl" transform="translate(6 ${y + 1}) rotate(-90)" text-anchor="end">25°</text>`;
});
out += '<line class="axis" x1="257" x2="257" y1="100" y2="100%"/>';
out += '<path class="curve" d="M8 29V8H26L33 0M0 36L8 29M741 0L748 8H780M0 497L8 506V540"/><text class="vlbl" x="1" y="7">LB</text>';
document.getElementById('plot').innerHTML = out;
```
